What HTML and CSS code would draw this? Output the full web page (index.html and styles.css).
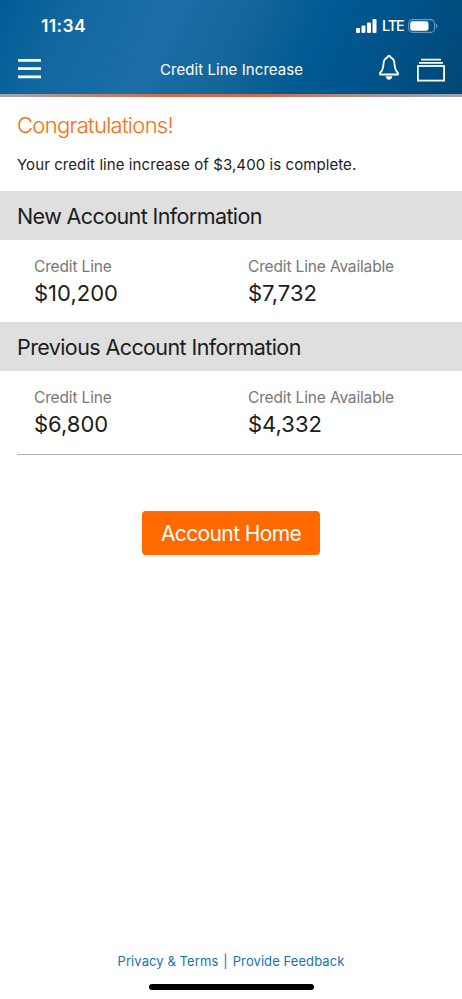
FILE: index.html
```html
<!DOCTYPE html>
<html lang="en">
<head>
<meta charset="utf-8">
<title>Credit Line Increase</title>
<link rel="stylesheet" href="styles.css">
</head>
<body>
<div class="screen">
  <header class="header">
    <div class="status">
      <span class="time">11:34</span>
      <div class="indicators">
        <svg class="signal" width="21" height="14" viewBox="0 0 21 14" fill="#fff"><rect x="0" y="9" width="4" height="5" rx="1"/><rect x="5.5" y="6.5" width="4" height="7.5" rx="1"/><rect x="11" y="3.5" width="4" height="10.5" rx="1"/><rect x="16.5" y="0" width="4" height="14" rx="1"/></svg>
        <span class="network">LTE</span>
        <svg class="battery" width="30" height="14" viewBox="0 0 30 14"><rect x=".6" y=".6" width="26" height="12.8" rx="4" fill="none" stroke="#6d9bbd" stroke-width="1.1"/><rect x="2.2" y="2.2" width="18.3" height="9.6" rx="2.3" fill="#fff"/><path d="M28 4.8c1.9.7 1.9 3.7 0 4.4z" fill="#6d9bbd"/></svg>
      </div>
    </div>
    <nav class="navbar">
      <svg class="menu" width="23" height="22" viewBox="0 0 23 22" fill="#fff"><path d="M0 1h23v2.700H0zM0 9.200h23v2.700H0zM0 17.600h23v2.700H0z"/></svg>
      <h1 class="title">Credit Line Increase</h1>
      <div class="actions">
        <svg class="bell" width="20" height="25" viewBox="0 0 20 25"><path d="M10 1c1.100 0 1.700.7 1.900 1.700 2.200.8 3.300 2.700 3.500 5.400.3 4.900.7 7.400 3.500 9.700v1.700H1.100v-1.700c2.800-2.300 3.200-4.800 3.500-9.700.2-2.700 1.300-4.600 3.500-5.400C8.300 1.700 8.900 1 10 1z" fill="none" stroke="#fff" stroke-width="1.800" stroke-linejoin="round"/><path d="M6.700 21.200h6.600c-.3 2-1.600 3.500-3.300 3.500s-3-1.500-3.300-3.500z" fill="#fff"/></svg>
        <svg class="cards" width="28" height="24" viewBox="0 0 28 24"><path d="M4 .8h20v1.700H4zM2 4h24v1.700H2z" fill="#fff"/><rect x=".9" y="8" width="26.200" height="14.600" fill="none" stroke="#fff" stroke-width="1.800"/></svg>
      </div>
    </nav>
  </header>
  <main class="content">
    <section class="intro">
      <h2 class="congrats">Congratulations!</h2>
      <p class="message">Your credit line increase of $3,400 is complete.</p>
    </section>
    <h3 class="band">New Account Information</h3>
    <dl class="figures">
      <div><dt>Credit Line</dt><dd>$10,200</dd></div>
      <div><dt>Credit Line Available</dt><dd>$7,732</dd></div>
    </dl>
    <h3 class="band">Previous Account Information</h3>
    <dl class="figures">
      <div><dt>Credit Line</dt><dd>$6,800</dd></div>
      <div><dt>Credit Line Available</dt><dd>$4,332</dd></div>
    </dl>
    <hr class="rule">
    <button class="home">Account Home</button>
  </main>
  <footer class="footer">
    <div class="links"><a>Privacy &amp; Terms</a><span>|</span><a>Provide Feedback</a></div>
    <div class="indicator"></div>
  </footer>
</div>
</body>
</html>
```
FILE: styles.css
```css
* { box-sizing: border-box; margin: 0; padding: 0; }
body { font-family: Inter, "Liberation Sans", sans-serif; background: #fff; color: #1c1c1c; }
h1, h2, h3 { font-weight: 400; }
svg { display: block; }
.screen { width: 462px; height: 999px; display: flex; flex-direction: column; overflow: hidden; white-space: nowrap; }
.header { height: 97px; flex: none; color: #fff; border-bottom: 3px solid; border-image: linear-gradient(90deg, #a6a6ad 0, #bd8b7b 15%, #d06d49 35%, #d06d49 58%, #b28b80 77%, #9ba4b0 100%) 1; background: linear-gradient(115deg, #005b94 0, #11679f 14%, #1b6ea8 34%, #146799 50%, #005a93 66%, #00548b 80%, #004776 100%); }
.status { height: 50px; display: flex; justify-content: space-between; padding: 14px 24px 0 41px; }
.time { font-size: 17.500px; font-weight: 600; line-height: 23px; letter-spacing: .4px; }
.indicators { display: flex; height: 23px; align-items: center; }
.signal { margin-right: 5px; }
.network { font-size: 14.500px; font-weight: 500; line-height: 23px; width: 26px; letter-spacing: -1.100px; }
.navbar { height: 44px; display: grid; grid-template-columns: 100px 1fr 100px; padding: 0 17px 0 18px; }
.menu { margin-top: 8px; }
.title { font-size: 15px; line-height: 20px; margin-top: 10px; text-align: center; letter-spacing: .07px; }
.actions { display: flex; justify-content: flex-end; gap: 18px; }
.bell { margin-top: 5px; }
.cards { margin-top: 8px; }
.content { flex: 1; }
.intro { height: 94px; padding: 14px 17px 0; }
.congrats { font-size: 22px; font-weight: 300; line-height: 28px; color: #ff6a10; letter-spacing: -.7px; }
.message { font-size: 15px; line-height: 20px; margin-top: 16px; letter-spacing: .08px; }
.band { height: 49px; line-height: 50px; padding-left: 17px; background: #dfdfdf; font-size: 21.500px; letter-spacing: -.6px; }
.figures { display: grid; grid-template-columns: 214px 1fr; padding: 17px 0 0 34px; height: 82px; }
dt { font-size: 15.500px; line-height: 20px; color: #777; letter-spacing: -.15px; }
dd { font-size: 22px; line-height: 28px; margin-top: 2px; }
.rule { border: 0; height: 1px; background: #b3b3b3; margin: 1px 0 0 17px; }
.home { display: block; width: 178px; height: 44px; margin: 56px auto 0 142px; border: 0; border-radius: 4px; background: #ff6900; color: #fff; font: 400 21px/44px Inter, sans-serif; letter-spacing: -.62px; padding-top: 1px; }
.footer { height: 47px; flex: none; }
.links { display: flex; justify-content: center; font-size: 13px; line-height: 18px; color: #1674ae; gap: 5px; letter-spacing: .08px; }
.indicator { width: 165px; height: 6px; border-radius: 3px; background: #000; margin: 14px auto 0; }
```
